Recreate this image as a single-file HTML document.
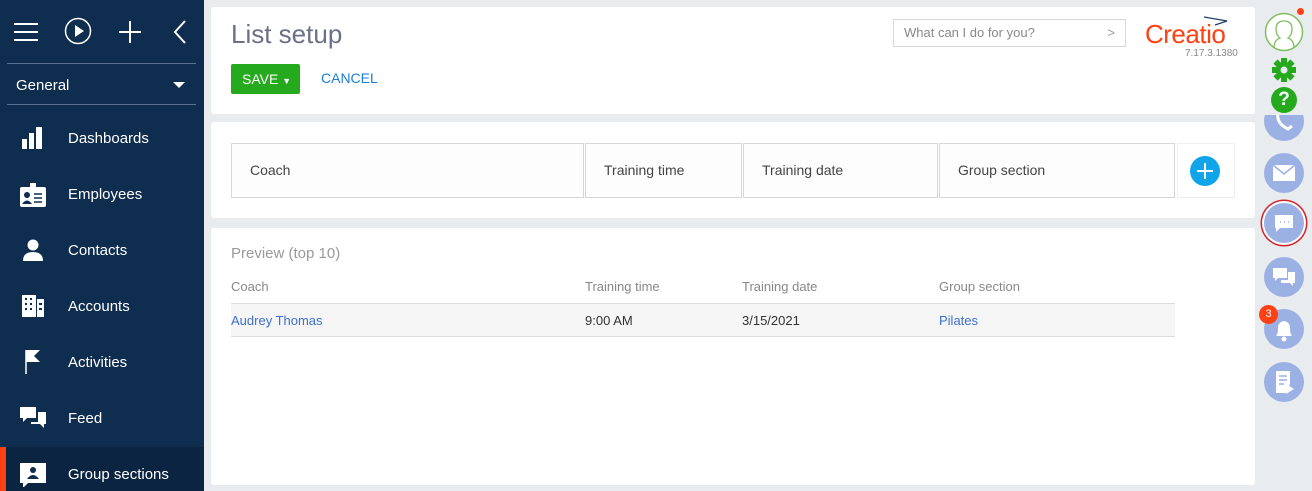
<!DOCTYPE html>
<html><head><meta charset="utf-8"><style>
*{margin:0;padding:0;box-sizing:border-box}
body{width:1312px;height:491px;overflow:hidden;background:#e9ecee;font-family:"Liberation Sans",sans-serif;position:relative}
.sb{position:absolute;left:0;top:0;width:204px;height:491px;background:#0f2d4f;color:#fff}
.abs{position:absolute}
.nav{position:absolute;left:68px;font-size:15px;color:#fff}
.ic{position:absolute;left:20px;width:26px;height:24px}
.panel{position:absolute;left:211px;width:1044px;background:#fff;border-radius:3px}
.col{position:absolute;top:143px;height:55px;border:1px solid #d6d6d6;background:#fdfdfd;font-size:14px;color:#444;padding:0 18px;line-height:53px}
.rb{position:absolute;left:1264px;width:40px;height:40px;border-radius:50%;background:#9bb1e3}
.th{position:absolute;top:279px;font-size:13px;color:#888}
.td{position:absolute;top:313px;font-size:13px;color:#333}
</style></head><body>
<div class="sb">
 <svg class="abs" style="left:14px;top:20px" width="26" height="24"><path d="M0 4h24M0 12h24M0 20h24" stroke="#fff" stroke-width="2"/></svg>
 <svg class="abs" style="left:64px;top:17px" width="28" height="28"><circle cx="14" cy="14" r="12.5" fill="none" stroke="#fff" stroke-width="1.5"/><path d="M11 8v12l9-6z" fill="#fff"/></svg>
 <svg class="abs" style="left:118px;top:20px" width="24" height="24"><path d="M12 1v22M1 12h22" stroke="#fff" stroke-width="2"/></svg>
 <svg class="abs" style="left:172px;top:20px" width="16" height="24"><path d="M13 1L3 12l10 11" fill="none" stroke="#fff" stroke-width="2"/></svg>
 <div class="abs" style="left:7px;top:63px;width:189px;height:1px;background:#5a7190"></div>
 <div class="abs" style="left:16px;top:77px;font-size:15px">General</div>
 <svg class="abs" style="left:173px;top:82px" width="12" height="6"><path d="M0 0h12L6 6z" fill="#fff"/></svg>
 <div class="abs" style="left:7px;top:104px;width:189px;height:1px;background:#5a7190"></div>
 <svg class="ic" style="top:127px"><rect x="2" y="12" width="5" height="10" fill="#fff"/><rect x="9" y="6" width="5" height="16" fill="#fff"/><rect x="16" y="0" width="6" height="22" fill="#fff"/></svg>
 <div class="nav" style="top:130px">Dashboards</div>
 <svg class="ic" style="top:183px"><rect x="0" y="4" width="26" height="20" rx="2" fill="#fff"/><rect x="10" y="0" width="6" height="6" fill="#fff"/><circle cx="7" cy="12" r="3" fill="#0f2d4f"/><path d="M2 21q5-7 10 0z" fill="#0f2d4f"/><path d="M14 11h8M14 15h8M14 19h8" stroke="#0f2d4f" stroke-width="1.5"/></svg>
 <div class="nav" style="top:186px">Employees</div>
 <svg class="ic" style="top:239px"><circle cx="13" cy="6" r="5.5" fill="#fff"/><path d="M3 22q0-9 10-9t10 9z" fill="#fff"/></svg>
 <div class="nav" style="top:242px">Contacts</div>
 <svg class="ic" style="top:295px"><rect x="2" y="0" width="14" height="22" fill="#fff"/><rect x="17" y="4" width="7" height="18" fill="#fff"/><path d="M5 4h2M10 4h2M5 9h2M10 9h2M5 14h2M10 14h2M19 9h3M19 14h3" stroke="#0f2d4f" stroke-width="2"/></svg>
 <div class="nav" style="top:298px">Accounts</div>
 <svg class="ic" style="top:350px"><path d="M6 0v26" stroke="#fff" stroke-width="1.5"/><path d="M6 0h14l-6 6 6 6H6z" fill="#fff"/></svg>
 <div class="nav" style="top:354px">Activities</div>
 <svg class="ic" style="top:407px"><path d="M0 0h16v11H7l-4 4v-4H0z" fill="#fff"/><path d="M18 5h8v12h-2v4l-4-4h-9v-2h7z" fill="#fff"/></svg>
 <div class="nav" style="top:410px">Feed</div>
 <div class="abs" style="left:0;top:447px;width:204px;height:44px;background:#0b2441"></div>
 <div class="abs" style="left:0;top:447px;width:6px;height:44px;background:#ff4013"></div>
 <svg class="ic" style="top:463px"><path d="M0 0h26v20H8l-5 5v-5H0z" fill="#fff"/><circle cx="13" cy="7" r="3" fill="#0f2d4f"/><path d="M7 16q6-8 12 0z" fill="#0f2d4f"/></svg>
 <div class="nav" style="top:466px">Group sections</div>
</div>

<div class="panel" style="top:7px;height:107px">
 <div class="abs" style="left:20px;top:12px;font-size:26px;color:#6b6f87">List setup</div>
 <div class="abs" style="left:20px;top:57px;width:69px;height:30px;background:#24aa1c;border-radius:2px;color:#fff;font-size:14px;line-height:30px;padding-left:11px">SAVE <span style="font-size:9px">▼</span></div>
 <div class="abs" style="left:110px;top:63px;font-size:14px;color:#1a7ed9">CANCEL</div>
 <div class="abs" style="left:682px;top:12px;width:233px;height:28px;border:1px solid #d8d8d8;font-size:13px;color:#888;line-height:26px;padding-left:10px">What can I do for you?<span style="position:absolute;right:10px;color:#999">&gt;</span></div>
 <div class="abs" style="left:934px;top:12px;font-size:26px;color:#ff4013;letter-spacing:-0.5px">Creatio</div>
 <svg class="abs" style="left:993px;top:9px" width="24" height="10"><path d="M0 1l23 4-12 4" fill="none" stroke="#1f3e66" stroke-width="1.3"/></svg>
 <div class="abs" style="left:974px;top:41px;font-size:10px;color:#888">7.17.3.1380</div>
</div>

<div class="panel" style="top:122px;height:96px"></div>
<div class="col" style="left:231px;width:353px">Coach</div>
<div class="col" style="left:585px;width:157px">Training time</div>
<div class="col" style="left:743px;width:195px">Training date</div>
<div class="col" style="left:939px;width:236px">Group section</div>
<div class="col" style="left:1177px;width:58px;border-color:#eee;background:#fff"></div>
<div class="abs" style="left:1190px;top:156px;width:30px;height:30px;border-radius:50%;background:#0fa5e8"><svg width="30" height="30"><path d="M15 7v16M7 15h16" stroke="#fff" stroke-width="2"/></svg></div>

<div class="panel" style="top:228px;height:257px"></div>
<div class="abs" style="left:231px;top:245px;font-size:15px;color:#999">Preview (top 10)</div>
<div class="th" style="left:231px">Coach</div>
<div class="th" style="left:585px">Training time</div>
<div class="th" style="left:742px">Training date</div>
<div class="th" style="left:939px">Group section</div>
<div class="abs" style="left:231px;top:303px;width:944px;height:34px;background:#f5f5f5;border-top:1px solid #ddd;border-bottom:1px solid #ddd"></div>
<div class="td" style="left:231px;color:#3e6fd0">Audrey Thomas</div>
<div class="td" style="left:585px">9:00 AM</div>
<div class="td" style="left:742px">3/15/2021</div>
<div class="td" style="left:939px;color:#3e6fd0">Pilates</div>

<div class="abs" style="left:1264px;top:115px;width:40px;height:26px;overflow:hidden"><div class="rb" style="left:0;top:-14px"></div><svg class="abs" style="left:8px;top:-6px" width="24" height="24"><path d="M6 4q-2 10 10 16l4-3" fill="none" stroke="#fff" stroke-width="3"/></svg></div>
<svg class="abs" style="left:1264px;top:12px" width="40" height="40"><circle cx="20" cy="20" r="18.5" fill="#fff" stroke="#7fbf5f" stroke-width="1.5"/><path d="M10 36q0-8 6-10-4-3-4-9 0-8 8-8t8 8q0 6-4 9 6 2 6 10" fill="none" stroke="#7fbf5f" stroke-width="1.3"/></svg>
<div class="abs" style="left:1297px;top:8px;width:7px;height:7px;border-radius:50%;background:#ff4013"></div>
<svg class="abs" style="left:1271px;top:57px" width="26" height="26"><g fill="#24aa1c" transform="translate(13 13)"><circle r="8"/><rect x="-3" y="-12" width="6" height="24"/><rect x="-3" y="-12" width="6" height="24" transform="rotate(45)"/><rect x="-3" y="-12" width="6" height="24" transform="rotate(90)"/><rect x="-3" y="-12" width="6" height="24" transform="rotate(135)"/><circle r="3.5" fill="#e9ecee"/></g></svg>
<div class="abs" style="left:1271px;top:87px;width:26px;height:26px;border-radius:50%;background:#24aa1c;color:#fff;font-weight:bold;font-size:19px;text-align:center;line-height:26px">?</div>
<div class="rb" style="top:153px"><svg width="40" height="40"><rect x="9" y="12" width="22" height="16" fill="#fff"/><path d="M9 12l11 9 11-9" fill="none" stroke="#9bb1e3" stroke-width="1.5"/></svg></div>
<div class="rb" style="top:203px;box-shadow:0 0 0 2px #fff,0 0 0 3.5px #d2262e"><svg width="40" height="40"><path d="M11 12h18v13H16l-4 4v-4h-1z" fill="#fff"/><path d="M16 19h1M20 19h1M24 19h1" stroke="#9bb1e3" stroke-width="1.5"/></svg></div>
<div class="rb" style="top:257px"><svg width="40" height="40"><path d="M9 11h14v10H14l-3 3v-3H9z" fill="#fff"/><path d="M24 15h7v11h-2v3l-3-3h-9v-3h7z" fill="#fff"/></svg></div>
<div class="rb" style="top:309px"><svg width="40" height="40"><path d="M12 27q2-2 2-8 0-6 6-7 6 1 6 7 0 6 2 8z" fill="#fff"/><circle cx="20" cy="30" r="2.5" fill="#fff"/></svg></div>
<div class="abs" style="left:1259px;top:305px;width:19px;height:19px;border-radius:50%;background:#ff4013;color:#fff;font-size:11px;text-align:center;line-height:19px">3</div>
<div class="rb" style="top:362px"><svg width="40" height="40"><path d="M12 9h14v13l-4 9H12z" fill="#fff"/><path d="M15 14h8M15 18h8M15 22h5" stroke="#9bb1e3" stroke-width="1.5"/><path d="M22 22l8 5-8 5z" fill="#fff"/></svg></div>
</body></html>
